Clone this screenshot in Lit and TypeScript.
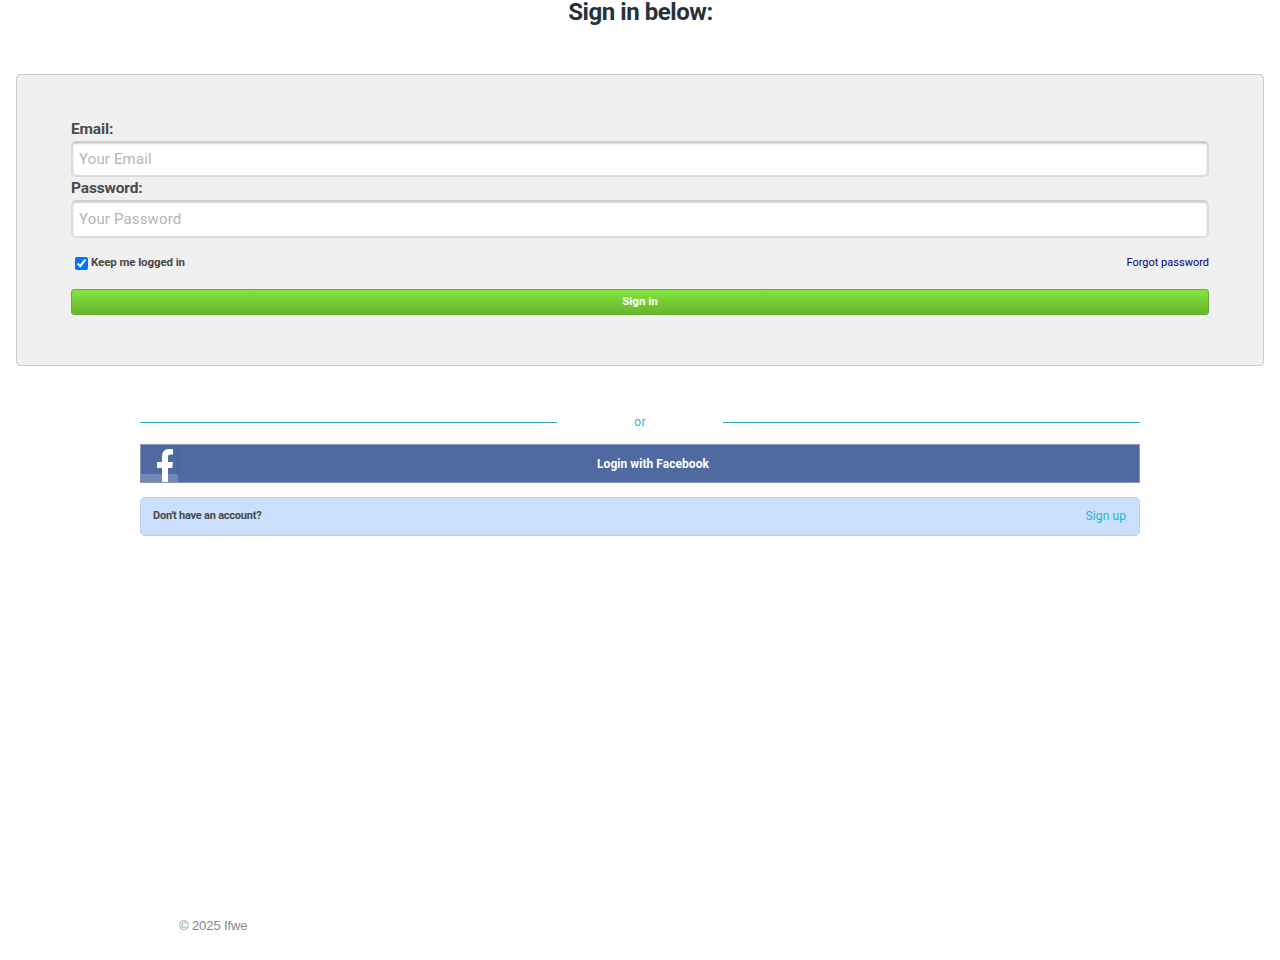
import { LitElement, html, css } from "lit";
import { customElement } from "lit/decorators.js";

@customElement("app-root")
export class AppRoot extends LitElement {
  static styles = css`
    :host { display: block; font-family: Roboto, "Noto Sans", sans-serif; color: #484848; background: #fff; }
    * { box-sizing: border-box; }
    h1 { margin: 0; height: 74px; padding-left: 1px; font-size: 24px; line-height: 24px; font-weight: 700; color: #263238; text-align: center; letter-spacing: -0.45px; }
    .panel { margin: 0 16px; height: 292px; padding: 44px 54px 0; background: #f0f0f0; border: 1px solid #ccc; border-radius: 4px; }
    label.field { display: block; font-size: 15.5px; font-weight: 700; line-height: 20px; letter-spacing: -0.15px; color: #4a4a4a; }
    .email-label { height: 22px; }
    .pw-label { height: 23px; padding-top: 1px; letter-spacing: -0.25px; }
    input.text { display: block; width: 100%; border: 2px solid #dcdcdc; border-top-color: #cdcdcd; box-shadow: inset 0 1px 2px #d4d4d4; border-radius: 5px; background: #fff; padding: 0 6px 0; font: 400 15px Roboto, sans-serif; letter-spacing: 0.15px; outline: none; color: #333; }
    input.text::placeholder { color: #b5b5b5; opacity: 1; }
    .e { height: 36px; }
    .p { height: 38px; }
    .opts { display: flex; justify-content: space-between; align-items: flex-start; height: 51px; padding-top: 16px; }
    .keep { display: flex; font-size: 11.5px; font-weight: 700; line-height: 16px; letter-spacing: -0.1px; color: #484848; }
    .keep input { margin: 3px 3px 0 4px; width: 13px; height: 13px; }
    .forgot { font-size: 11px; padding-top: 1px; color: #000080; text-decoration: none; line-height: 16px; }
    .signin { display: block; width: 100%; height: 26px; padding: 0 0 3px; border: 1px solid #6aaa36; border-radius: 3px; background: linear-gradient(#84e43f, #68b52d); color: #fff; font: 700 11.5px Roboto, sans-serif; }
    .lower { width: 1000px; margin: 0 auto; }
    .or { display: flex; align-items: center; justify-content: space-between; margin-top: 47px; height: 18px; font-size: 12px; letter-spacing: 0.4px; color: #22b5d3; }
    .or span { padding-bottom: 1px; }
    .or i { display: block; width: 417px; height: 1px; background: #3aa6c6; }
    .fb { display: flex; align-items: center; height: 39px; margin-top: 13px; border: 1px solid #8b99b5; background: #4f6aa1; color: #fff; font: 700 12px Roboto, sans-serif; letter-spacing: 0.05px; }
    .fb svg { display: block; flex: none; width: 37px; height: 37px; }
    .fb span { flex: 1; text-align: center; padding-right: 11px; }
    .acct { display: flex; justify-content: space-between; align-items: center; height: 39px; margin-top: 14px; padding: 0 13px 0 12px; background: #cbe0fd; border: 1px solid #bdcde4; border-radius: 5px; }
    .acct b { font-size: 11px; letter-spacing: -0.22px; color: #484848; padding-bottom: 3px; }
    .acct a { font-size: 12px; letter-spacing: 0.1px; padding-bottom: 1px; color: #22b5d3; text-decoration: none; }
    footer { margin-top: 381px; padding-left: 179px; height: 18px; font: 13px/18px "Liberation Sans", Arial, sans-serif; color: #888; letter-spacing: -0.1px; }
  `;

  render() {
    return html`
      <h1>Sign in below:</h1>
      <div class="panel">
        <label class="field email-label">Email:</label>
        <input class="text e" placeholder="Your Email" />
        <label class="field pw-label">Password:</label>
        <input class="text p" placeholder="Your Password" />
        <div class="opts">
          <label class="keep"><input type="checkbox" checked />Keep me logged in</label>
          <a class="forgot" href="#">Forgot password</a>
        </div>
        <button class="signin">Sign in</button>
      </div>
      <div class="lower">
        <div class="or"><i></i><span>or</span><i></i></div>
        <div class="fb">
          <svg viewBox="0 0 37 37">
            <rect width="37" height="37" fill="#4f6aa1"></rect>
            <rect y="29" width="37" height="8" fill="#7388b5"></rect>
            <rect x="36" width="1" height="29" fill="#46608f"></rect>
            <path d="M21 37V23h-5v-6h5v-5.500C21 6.500 24 4 28 4h4v5.500h-2.500C27.700 9.500 27 10.300 27 12v5h5l-.8 6H27v14z" fill="#fff"></path>
          </svg>
          <span>Login with Facebook</span>
        </div>
        <div class="acct"><b>Don't have an account?</b><a href="#">Sign up</a></div>
      </div>
      <footer>© 2025 Ifwe</footer>
    `;
  }
}
